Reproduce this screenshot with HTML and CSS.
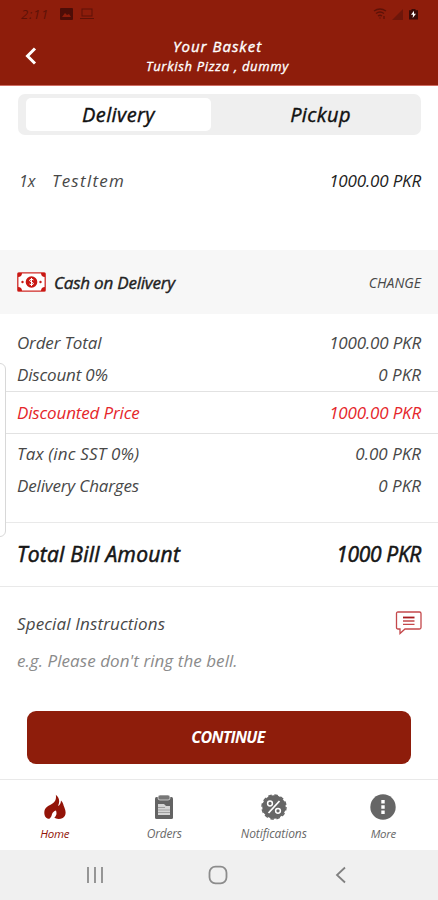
FILE: index.html
```html
<!DOCTYPE html>
<html lang="en">
<head>
<meta charset="utf-8">
<title>Your Basket</title>
<link rel="stylesheet" href="styles.css">
</head>
<body>
<div class="screen">
  <header class="header">
    <div class="status">
      <div class="status-left">
        <span class="clock">2:11</span>
        <svg width="13" height="12" viewBox="0 0 13 12"><rect width="13" height="12" rx="1" fill="#4d0d07"/><path d="M2 9l3-4 2 2 2-1 2 3z" fill="#8e1d0b"/></svg>
        <svg class="laptop" width="14" height="12" viewBox="0 0 14 12" fill="none" stroke="#5e1208"><rect x="2" y="1" width="10" height="7"/><path d="M0 10.5h14"/></svg>
      </div>
      <div class="status-right">
        <svg width="14" height="12" viewBox="0 0 14 12" fill="none" stroke="#5e1208" stroke-width="1.3"><path d="M1 3q6-4 12 0M3 5.500q4-3 8 0M5 8q2-1.500 4 0M7 9.500v1M11 8v3"/></svg>
        <svg width="11" height="11" viewBox="0 0 11 11"><path d="M11 0v11H0z" fill="#6e160a"/></svg>
        <svg class="battery" width="9" height="12" viewBox="0 0 9 12"><path d="M2.500 1h4v1.300H9V11.500H0V2.300h2.500z" fill="#3a0b08"/><path d="M5 2.800L2 6.800h2L3.700 10 7 5.800H5z" fill="#fff"/></svg>
      </div>
    </div>
    <div class="titlebar">
      <svg class="back" width="12" height="18" viewBox="0 0 12 18" fill="none" stroke="#fff" stroke-width="3"><path d="M10 1.500L2.500 9l7.500 7.500"/></svg>
      <div class="titles">
        <h1 class="title">Your Basket</h1>
        <p class="subtitle">Turkish Pizza , dummy</p>
      </div>
    </div>
  </header>

  <main>
    <div class="tabs">
      <div class="tab tab-active">Delivery</div>
      <div class="tab">Pickup</div>
    </div>

    <div class="item">
      <span class="qty">1x</span>
      <span class="item-name">TestItem</span>
      <span class="price black">1000.00 PKR</span>
    </div>

    <div class="payment">
      <svg width="29" height="20" viewBox="0 0 29 20"><rect x=".8" y=".8" width="27.400" height="18.400" rx="1" fill="#fff" stroke="#cf2a26" stroke-width="1.300"/><path d="M1 1h4q0 4-4 4zM28 1h-4q0 4 4 4zM1 19h4q0-4-4-4zM28 19h-4q0-4 4-4z" fill="#c91813"/><circle cx="14.500" cy="10" r="5.800" fill="#c91813"/><circle cx="5.500" cy="10" r="1.200" fill="#c91813"/><circle cx="23.500" cy="10" r="1.200" fill="#c91813"/><path d="M16.500 8q-2-1.500-3.500-.4t1.500 2.400 1.500 2.300-3.500-.3M14.500 6v8" fill="none" stroke="#fff" stroke-width="1"/></svg>
      <span class="method">Cash on Delivery</span>
      <span class="change">CHANGE</span>
    </div>

    <section class="lines first">
      <div class="line"><span class="order-total">Order Total</span><span class="price">1000.00 PKR</span></div>
      <div class="line"><span class="discount">Discount 0%</span><span>0 PKR</span></div>
    </section>
    <div class="line discounted"><span class="narrow">Discounted Price</span><span class="price">1000.00 PKR</span></div>
    <section class="lines second">
      <div class="line"><span class="tax">Tax (inc SST 0%)</span><span>0.00 PKR</span></div>
      <div class="line"><span class="narrow">Delivery Charges</span><span>0 PKR</span></div>
    </section>
    <div class="total"><span class="total-label">Total Bill Amount</span><span class="total-value">1000 PKR</span></div>

    <section class="notes">
      <div class="notes-head">
        <span class="notes-title">Special Instructions</span>
        <svg width="27" height="24" viewBox="0 0 27 24" fill="none" stroke="#c4484b" stroke-width="1.300"><path d="M3 1h21.500q1.500 0 1.500 1.500v14q0 1.500-1.500 1.500H10l-5 4.500V18H3q-1.500 0-1.500-1.500v-14Q1.500 1 3 1z"/><path d="M8 6.500h11.500" stroke="#a81c20" stroke-width="1.800"/><path d="M8 10h11.500M8 13.300h11.500"/></svg>
      </div>
      <div class="placeholder">e.g. Please don't ring the bell.</div>
    </section>

    <div class="continue">CONTINUE</div>
  </main>

  <nav class="nav">
    <div class="nav-item active">
      <svg width="22" height="26" viewBox="0 0 22 26"><path d="M11.800.8C15.600 4 16 7.500 14 12c1.900-.8 2.800-2.500 3-5.500C19.500 9 19.200 11 20.400 13.500c2 4.500 1.600 8.500-1.700 10.500-2.700 1.600-7 1.200-8.400-.4 2.200-1.700 2.700-4 1.700-7-2 .6-3.500 1.800-4.100 4-.4 1.700-.9 3.200-2.500 4.200C2.300 25 .3 22.500.3 18.500.3 13 4.500 12 8.500 9.500 11.500 7.500 12.500 4.500 11.800.8z" fill="#931408"/></svg>
      <span class="l-home">Home</span>
    </div>
    <div class="nav-item">
      <svg width="20" height="26" viewBox="0 0 20 26"><rect x="1" y="3" width="18" height="22" rx="1.500" fill="#636363"/><rect x="4" y="1" width="12" height="5" rx="2" fill="#777" stroke="#fff" stroke-width=".6"/><path d="M4 10h6l2 2h4v9H4z" fill="#d4d4d4"/><path d="M4 13.500h7M4 16h12M4 18.500h12" stroke="#929292" stroke-width=".8"/></svg>
      <span class="l-orders">Orders</span>
    </div>
    <div class="nav-item">
      <svg width="26" height="26" viewBox="0 0 26 26"><circle cx="13" cy="13" r="11.700" fill="#666"/><circle cx="13" cy="13" r="12" fill="none" stroke="#666" stroke-width="1.500" stroke-dasharray="3.600 2.683"/><path d="M18.500 7L7.500 19" stroke="#fff" stroke-width="1.800"/><circle cx="9" cy="9.500" r="2.400" fill="none" stroke="#fff" stroke-width="1.500"/><circle cx="17" cy="16.800" r="2.400" fill="none" stroke="#fff" stroke-width="1.500"/></svg>
      <span class="l-notif">Notifications</span>
    </div>
    <div class="nav-item">
      <svg width="26" height="26" viewBox="0 0 26 26"><circle cx="13" cy="13" r="12.700" fill="#666"/><path d="M11.300 6h3.400v3.400h-3.400zM11.300 11.300h3.400v3.400h-3.400zM11.300 16.600h3.400V20h-3.400z" fill="#fff"/></svg>
      <span class="l-more">More</span>
    </div>
  </nav>

  <footer class="system">
    <svg width="18" height="18" viewBox="0 0 18 18" stroke="#8c8c8c" stroke-width="1.800"><path d="M2 1v16M9 1v16M16 1v16"/></svg>
    <svg width="20" height="20" viewBox="0 0 20 20" fill="none" stroke="#8c8c8c" stroke-width="1.800"><rect x="1.500" y="1.700" width="17" height="16.600" rx="6"/></svg>
    <svg width="12" height="18" viewBox="0 0 12 18" fill="none" stroke="#808080" stroke-width="1.800"><path d="M10 1.500L2 9l8 7.500"/></svg>
  </footer>
  <div class="edge-handle"></div>
</div>
</body>
</html>
```
FILE: styles.css
```css
* { box-sizing: border-box; margin: 0; padding: 0; }
body {
  width: 438px;
  background: #fff;
  color: #484848;
  font: italic 400 17px "Open Sans", sans-serif;
  white-space: nowrap;
}
svg { display: block; flex: none; }
.screen { position: relative; height: 900px; overflow: hidden; display: flex; flex-direction: column; }
main { flex: 1; }

.header { height: 86px; background: #8e1d0b; border-bottom: 1px solid #cf6c62; color: #fff; }
.status { height: 28px; padding: 0 20px 0 21px; display: flex; justify-content: space-between; align-items: center; }
.status-left, .status-right { display: flex; align-items: center; }
.clock { width: 39px; font-size: 13px; letter-spacing: .8px; color: #5e1208; }
.laptop { margin-left: 7px; }
.status-right { gap: 5px; }
.battery { margin-left: 1px; }
.titlebar { height: 57px; display: grid; grid-template-columns: 62px 1fr 65px; align-items: start; }
.back { margin: 19px 0 0 25px; }
.titles { padding-top: 8px; text-align: center; -webkit-text-stroke: .35px currentColor; }
.title { font-size: 15px; font-weight: 400; line-height: 21px; letter-spacing: 1px; }
.subtitle { font-size: 13px; line-height: 18px; letter-spacing: .7px; }

.tabs { display: flex; height: 41px; margin: 8px 17px 0 18px; padding: 4px 0 4px 8px; border-radius: 7px; background: #efefef; color: #111; }
.tab { flex: 1; padding-left: 9px; text-align: center; font-size: 20px; line-height: 33px; letter-spacing: .4px; -webkit-text-stroke: .4px currentColor; }
.tab-active { flex: 0 0 185px; padding: 0; background: #fff; border-radius: 5px; }

.item { display: flex; height: 115px; padding: 33px 17px 0 19px; line-height: 26px; }
.qty { width: 33px; font-size: 16px; }
.item-name { flex: 1; letter-spacing: 1.200px; }
.price { letter-spacing: -.17px; }
.black { color: #222; }

.payment { display: flex; align-items: center; height: 64px; padding: 0 17px; background: #f7f7f7; }
.method { flex: 1; margin-left: 8px; letter-spacing: -.21px; color: #222; -webkit-text-stroke: .4px currentColor; }
.change { font-size: 14px; }

.line { display: flex; justify-content: space-between; height: 32px; padding: 0 17px; line-height: 31px; }
.first { height: 77px; padding-top: 13px; }
.second { height: 88px; padding-top: 4px; }
.order-total, .narrow { letter-spacing: -.15px; }
.discount { letter-spacing: -.17px; }
.tax { letter-spacing: .17px; }
.discounted { height: 43px; line-height: 41px; border: solid #e2e2e2; border-width: 1px 0; color: #e5262b; }
.total { display: flex; justify-content: space-between; height: 65px; padding: 0 17px; border: solid #e9e9e9; border-width: 1px 0; line-height: 62px; font-size: 21px; color: #161616; -webkit-text-stroke: .55px currentColor; }
.total-label { letter-spacing: .25px; }
.total-value { letter-spacing: -.34px; }

.notes { height: 124px; padding: 24px 16px 0 17px; }
.notes-head { display: flex; justify-content: space-between; height: 26px; line-height: 25px; }
.notes-title { letter-spacing: .14px; }
.placeholder { margin-top: 10px; line-height: 27px; letter-spacing: .06px; color: #8b8b8b; }
.continue { height: 53px; margin: 0 27px; padding-left: 18px; border-radius: 9px; background: #8e1d0b; color: #fff; text-align: center; font-size: 16px; font-weight: 700; line-height: 53px; letter-spacing: -.7px; }

.nav { display: flex; height: 71px; border-top: 1px solid #e9e9e9; }
.nav-item { width: 109.500px; display: flex; flex-direction: column; align-items: center; padding-top: 14px; font-size: 12px; line-height: 27px; color: #686868; }
.active { color: #931408; }
.l-home, .l-more { font-size: 11.500px; letter-spacing: -.3px; }
.l-orders { letter-spacing: -.24px; }
.l-notif { letter-spacing: -.08px; }

.system { display: flex; align-items: center; justify-content: center; gap: 104px; height: 50px; padding-right: 5px; background: #f0f0f0; }
.system svg:last-child { margin-left: 3px; }

.edge-handle { position: absolute; left: -8px; top: 363px; width: 14px; height: 174px; border: 1px solid #d8d8d8; border-radius: 6px; background: #fff; }
```
